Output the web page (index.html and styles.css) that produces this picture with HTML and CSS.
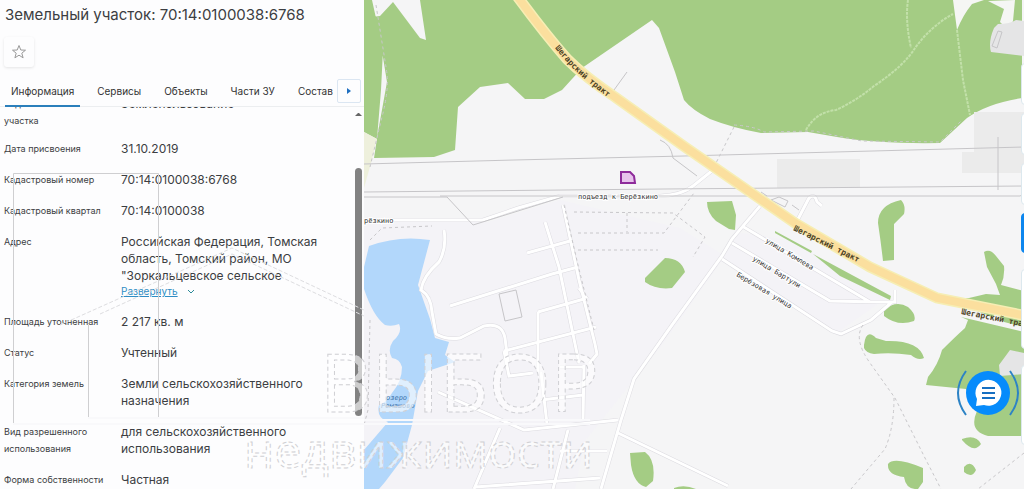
FILE: index.html
```
<!DOCTYPE html>
<html lang="ru">
<head>
  <meta charset="UTF-8">
  <meta name="viewport" content="width=device-width, initial-scale=1.0">
  <title>Земельный участок</title>
  <link rel="stylesheet" href="styles.css">
</head>
<body>
  <!-- Object card -->
  <aside class="panel">
    <h1>Земельный участок: 70:14:0100038:6768</h1>
    <button class="favorite" type="button" aria-label="В избранное">
      <svg viewBox="0 0 16 16" width="16" height="16"><path d="M8 1.500l1.800 4.500 4.700.2-3.700 3 1.300 4.600L8 11.200l-4.100 2.600L5.200 9.200l-3.700-3 4.700-.2z"/></svg>
    </button>

    <nav class="tabs">
      <a class="active" href="#info">Информация</a>
      <a href="#services">Сервисы</a>
      <a href="#objects">Объекты</a>
      <a href="#parts">Части ЗУ</a>
      <a href="#content">Состав</a>
      <button class="tabs-next" type="button" aria-label="Дальше">
        <svg viewBox="0 0 6 8" width="6" height="8"><path d="M1 1l4 3-4 3z"/></svg>
      </button>
    </nav>

    <div class="details" id="info">
      <dl>
        <div class="row"><dt class="tall">Вид земельного участка</dt><dd>Землепользование</dd></div>
        <div class="row"><dt>Дата присвоения</dt><dd>31.10.2019</dd></div>
        <div class="row"><dt>Кадастровый номер</dt><dd>70:14:0100038:6768</dd></div>
        <div class="row"><dt>Кадастровый квартал</dt><dd>70:14:0100038</dd></div>
        <div class="row">
          <dt>Адрес</dt>
          <dd>
            Российская Федерация, Томская область, Томский район, МО "Зоркальцевское сельское
            <div class="more">
              <a href="#address">Развернуть</a>
              <svg class="chevron" viewBox="0 0 8 6" width="8" height="6"><path d="M1 1l3 3 3-3"/></svg>
            </div>
          </dd>
        </div>
        <div class="row"><dt>Площадь уточненная</dt><dd>2 217 кв. м</dd></div>
        <div class="row"><dt>Статус</dt><dd>Учтенный</dd></div>
        <div class="row"><dt>Категория земель</dt><dd>Земли сельскохозяйственного назначения</dd></div>
        <div class="row"><dt class="tall">Вид разрешенного использования</dt><dd>для сельскохозяйственного использования</dd></div>
        <div class="row"><dt>Форма собственности</dt><dd>Частная</dd></div>
      </dl>
      <div class="scrollbar"><span class="up"></span><span class="thumb"></span></div>
    </div>
  </aside>

  <!-- Map -->
  <main class="map">
    <svg class="map-canvas" viewBox="364 0 660 489" preserveAspectRatio="xMinYMin slice">
      <defs>
        <g id="streets">
          <path d="M364 220h119l35-12 42-12h100q22-1 33-10l20-16"/>
          <path d="M444 230q3 18-5 32-16 14-18 28 10 6 11 22l4 22q10 6 24 4l24-12q18-4 21 12l3 24"/>
          <path d="M545 222l14 45 20 96M563 205l16 75 16 64 2 10-8 10M450 306l102-32 26-7M527 253l43-12M538 312l46-13M538 312v60M504 351l92-24M504 351l5 25 24-3M579 288l8 11"/>
          <path d="M541 400l42-5M541 372l6 52M584 365l-1 55M560 367h24M438 392l86 38 94-10"/>
          <path d="M760 206l-28 33-10 17-50 69-38 54-13 41-20 69"/>
          <path d="M618 433l110 53M500 428l-26 61M568 430l-15 59M475 487l125-9M560 451h47"/>
          <path d="M742 226l128 76M732 243l98 58 50 1h15v-12M722 259l110 72 9 3 30-14 21-18"/>
          <path d="M797 221l12-23q6-5 8 4l5 4"/>
        </g>
        <path id="trakt-a" d="M555 48q14 18 32 33 16 13 36 28"/>
        <path id="trakt-b" d="M793 230l90 45"/>
        <path id="trakt-c" d="M961 314l80 16"/>
      </defs>

      <rect class="ground" x="364" width="2000" height="1500"/>
      <path class="village" d="M364 222h124l72-22 120 28 45 28-60 85-80 100-10 48H364zM735 232l60 9 90 58-48 34-115-75z"/>

      <!-- forest -->
      <g class="forest">
        <path d="M364 0h8l11 50-2 40-4 49-13-7zM380 16l13-14 27 36 6 2-6-40h602v98q-34 5-55 20l-27 25q-61 1-103-6l-29-5-47 1q-28-5-51-14-18-9-26-19l-9-28-16-44-7-8-70 48-20 22-18 9h-19l-17-16-28 4-22 20-3 43-21 7-60 1 4-26 9-50-6-37-9-28z"/>
        <path d="M707 202l25-1 4 14-1 15-6-1-13-8q-9-8-9-19zM645 278l20-20q16 0 20 14l-13 16q-16 2-27-6zM630 453l15-1q11 8 8 29l-7 6q-12-3-15-22z"/>
        <path d="M901 200q5 5 3 14l-10 10v36l-11 1q-2-18-5-38 0-18 23-23zM884 310q12-10 24-3 9 8 6 14-16 6-30-5zM864 345q2-17 12-7l10 3q33-1 38 17-6 3-13-3-20-3-37-1-8-1-10-6z"/>
        <path d="M984 252q6-4 12 4l8 10q1 10-3 19l23 6v36l-20-5-7-9-5 4-32-13v-6h9l17-4 14 1-4-11-9-17zM961 317l63 15v104h-36q-20-5-11-25l-11-22-40-4 2-8q10-12 14-27 13-13 23-22l3-8z"/>
        <path d="M962 439q14-5 19 5-7 10-19-4zM964 467q7-8 12 3-4 9-12 2zM888 464q6-8 35 4v14l-5 7q-12 1-14-12-17-2-16-13zM775 231l37 20-1 2-36-20zM813 254l78 42-1 4-50-24z"/>
        <path d="M674 488q10-4 22 1h-22z"/>
      </g>
      <path class="clearing" d="M953 0l4 30q6-15 15-26l12-4zM988 1l16 8-4 13 8 8 5-9 2-21z"/>
      <path class="meadow" d="M364 132l13 7-6 24-7 25z"/>
      <path class="quarry" d="M998 24q12 0 18-4l8 1v35l-33-4q-3-10 3-24zM999 365l11-15 14 3v21l-24 2z"/>
      <path class="plots" d="M777 159h83v29h-83zM974 112h50v61h-62v-21h12z"/>
      <path class="lake" d="M364 267l5-21q30-11 61-6l-12 45 12 34 5 19 14 4-4 13 10 7-27 9-10 20-6 34-9 33-18 24-6 7h-15v-39l24-28q-12-4-9-17 8-3 13-12 10-12 10-26-2-8-10-9-5-8 1-17 10-9 6-17-7 3-14 1-12-9-21-36z"/>

      <!-- roads and tracks -->
      <use href="#streets" class="street-edge"/>
      <use href="#streets" class="street"/>
      <g class="power">
        <path d="M364 164l150-4 170-4 340-9M364 192l300-3 360-3M440 196h580l4-2M364 197h83l26 28 90-28M499 294l17-4 6 27-17 4zM998 137v53M627 72l-13 18M660 140q11 4 13 18l24 18"/>
        <path d="M761 192l6 4M771 200l8-3 9 4-3 6zM792 205l7 5M998 31l-6 15 5 2 5-16z"/>
      </g>
      <g class="track">
        <path d="M376 5l10 62q4 20-4 50l-12 50M574 212l99 1 32 24-12 20M627 213v19M578 233h86l30-40M578 250h80M564 205l14 60 16 65M734 125q20 1 30 7l50-1 48 10 78 1 22-22M734 127l-18 36M370 240l12-12 50-2M370 320l-2 90-4 15M863 325q-10 14 7 38l25 35 30 60 16 31M894 398q0 30-9 51l-34 40M1024 453l-46 36"/>
      </g>
      <path class="forest-path" d="M806 130q10-18 30-20 20-9 38-24 30-20 41-38 16-22 38-34M908 0q-3 20 3 48M957 30l6 50 7 35"/>

      <path class="main-edge" d="M517-4q28 38 50 63 18 18 48 38l70 50 110 76 75 44 67 31 90 18"/>
      <path class="main-road" d="M517-4q28 38 50 63 18 18 48 38l70 50 110 76 75 44 67 31 90 18"/>

      <path class="parcel" d="M621 172h9l4 4 1 7h-14z"/>

      <g class="road-name">
        <text><textPath href="#trakt-a">Шегарский тракт</textPath></text>
        <text><textPath href="#trakt-b">Шегарский тракт</textPath></text>
        <text><textPath href="#trakt-c">Шегарский тракт</textPath></text>
      </g>
      <g class="street-name">
        <text x="578" y="199">подъезд к Берёзкино</text>
        <text x="364" y="223">рёзкино</text>
        <text transform="translate(765 242) rotate(31)">улица Комлева</text>
        <text transform="translate(752 260) rotate(31)">улица Бартули</text>
        <text transform="translate(736 276) rotate(31)">Берёзовая улица</text>
      </g>
      <g class="lake-name">
        <text x="386" y="400">озеро</text>
        <text x="381" y="408">Ромашово</text>
      </g>
    </svg>

    <div class="controls">
      <button type="button" aria-label="Слои"></button>
      <button type="button" aria-label="Измерения"></button>
      <button type="button" aria-label="Печать"></button>
      <button class="on" type="button" aria-label="Легенда"></button>
      <button type="button" aria-label="Масштаб"></button>
      <button type="button" aria-label="Местоположение"></button>
    </div>

    <button class="chat" type="button" aria-label="Чат">
      <svg viewBox="0 0 64 50" width="64" height="50">
        <path class="wave" d="M10 3q-16 22 0 44M54 3q16 22 0 44"/>
        <circle class="chat-bg" cx="32" cy="25" r="22"/>
        <path class="bubble" d="M20 38l1-7a13 13 0 1 1 7 6z"/>
        <path class="lines" d="M26 20h13M26 25h13M26 30h13"/>
      </svg>
    </button>
  </main>

  <!-- Agency watermark -->
  <svg class="watermark" width="600" height="489" viewBox="0 0 600 489">
    <path class="frame" d="M13.500 425V173.500h145V418M88.500 325v93"/>
    <path class="shine" d="M88 418h276M13 424h577M364 420h226"/>
    <path class="roof" d="M60 325l172-77 132 62M100 314l132-60 132 62"/>
    <text class="brand" x="320" y="412">ВЫБОР</text>
    <text class="brand-sub" x="244" y="468">недвижимости</text>
  </svg>
</body>
</html>
```
FILE: styles.css
```
/* General styling */
* {
  box-sizing: border-box;
}

body {
  margin: 0;
  display: flex;
  height: 100vh;
  position: relative;
  overflow: hidden;
  font-family: Inter, "Liberation Sans", sans-serif;
  color: #3c3e42;
  background: #fdfdfe;
}

button {
  padding: 0;
  border: none;
  background: none;
  cursor: pointer;
}

/* Object card */
.panel {
  flex: 0 0 364px;
  display: flex;
  flex-direction: column;
  min-width: 0;
  min-height: 0;
}

.panel h1 {
  margin: 0;
  padding: 5px 5px 0;
  font-size: 15px;
  line-height: 20px;
  font-weight: 400;
  white-space: nowrap;
}

.favorite {
  width: 30px;
  height: 30px;
  margin: 12px 4px 8px;
  display: flex;
  align-items: center;
  justify-content: center;
  border-radius: 3px;
  box-shadow: 0 1px 3px rgba(0, 0, 0, 0.1);
}

.favorite svg {
  fill: none;
  stroke: #999;
}

.tabs {
  display: flex;
  align-items: center;
  flex-shrink: 0;
  height: 32px;
  padding: 0 3px 0 5px;
  border-bottom: 1px solid #eceef0;
}

.tabs a {
  height: 32px;
  margin-right: 11px;
  padding: 0 6px;
  font-size: 10px;
  line-height: 32px;
  color: #333;
  text-decoration: none;
  white-space: nowrap;
}

.tabs a:last-of-type {
  margin-right: 0;
  padding-right: 0;
}

.tabs .active {
  border-bottom: 2px solid #2b7fbb;
}

.tabs-next {
  width: 24px;
  height: 24px;
  margin-left: auto;
  border: 1px solid #dbe6f2;
  border-radius: 2px;
  fill: #1f6fc0;
}

/* Attributes */
.details {
  flex: 1;
  min-height: 0;
  position: relative;
  overflow: hidden;
}

.details dl {
  margin: -12px 0 0;
  padding: 0 44px 0 4px;
}

.row {
  display: flex;
  margin-bottom: 14px;
}

.row:first-child {
  margin-bottom: 11px;
}

.row dt {
  flex: 0 0 117px;
  padding-right: 10px;
  font-size: 9px;
  line-height: 17px;
  white-space: nowrap;
}

.row dt.tall {
  white-space: normal;
}

.row dd {
  margin: 0;
  font-size: 12px;
  line-height: 17px;
}

.more {
  display: flex;
  align-items: center;
  gap: 9px;
  height: 15px;
  font-size: 10px;
}

.more a {
  color: #2f8dc4;
}

.chevron {
  fill: none;
  stroke: #2b8a99;
}

.scrollbar {
  position: absolute;
  top: 0;
  right: 2px;
  width: 7px;
  height: 100%;
}

.up {
  display: block;
  margin-top: 6px;
  border: 3px solid transparent;
  border-top: 0;
  border-bottom: 3px solid #666;
}

.thumb {
  display: block;
  height: 65%;
  margin-top: 52px;
  border-radius: 4px;
  background: #828282;
}

/* Map */
.map {
  flex: 1;
  min-width: 0;
  position: relative;
  overflow: hidden;
}

.map-canvas {
  display: block;
  width: 100%;
  height: 100%;
}

.map-canvas path {
  fill: none;
}

.map-canvas .ground { fill: #f5f5f6; }
.map-canvas .village { fill: #f4f3f7; }
.map-canvas .forest path { fill: #a4cc84; }
.map-canvas .clearing { fill: #f5f6f4; }
.map-canvas .meadow { fill: #eef0dc; }
.map-canvas .quarry { fill: #e5e5e6; }
.map-canvas .plots { fill: #ebebeb; }
.map-canvas .lake { fill: #b2d7fb; }

.street-edge {
  fill: none;
  stroke: #dcdbe0;
  stroke-width: 4;
}

.street {
  fill: none;
  stroke: #fff;
  stroke-width: 3;
}

.power {
  stroke: #c6c5c8;
}

.track {
  stroke: #c8c7ca;
  stroke-dasharray: 3 3;
}

.forest-path {
  stroke: #c2e0a9;
  stroke-width: 2;
  stroke-dasharray: 3 1;
}

.main-edge {
  stroke: #f6eeb4;
  stroke-width: 11;
}

.main-road {
  stroke: #fbdf9e;
  stroke-width: 8;
}

.map-canvas .parcel {
  fill: #e7c3ec;
  stroke: #8e2b9b;
  stroke-width: 2;
}

.road-name,
.street-name,
.lake-name {
  font-family: "DejaVu Sans Mono", monospace;
}

.road-name {
  font-size: 8px;
  font-weight: bold;
  fill: #4d4326;
}

.street-name {
  font-size: 7px;
  fill: #333;
  stroke: #fff;
  stroke-width: 2px;
  paint-order: stroke;
}

.lake-name {
  font-size: 7px;
  font-style: italic;
  fill: #3f74ab;
}

/* Map controls */
.controls {
  position: absolute;
  top: 63px;
  right: -34px;
  display: flex;
  flex-direction: column;
  gap: 8px;
}

.controls button {
  width: 37px;
  height: 42px;
  border: 1px solid #dce8ee;
  border-radius: 4px;
  background: #fff;
}

.controls .on {
  height: 40px;
  border-color: #0d86ee;
  background: #0d86ee;
}

.controls .on ~ button {
  height: 80px;
  margin-top: 8px;
}

.chat {
  position: absolute;
  right: 4px;
  bottom: 71px;
  width: 64px;
  height: 50px;
}

.wave {
  fill: none;
  stroke: #2d83c5;
  stroke-width: 2;
}

.chat-bg { fill: #068bfb; }
.bubble { fill: #fff; }

.lines {
  stroke: #176fc1;
  stroke-width: 2;
}

/* Watermark */
.watermark {
  position: absolute;
  top: 0;
  left: 0;
  pointer-events: none;
  fill: none;
}

.frame {
  stroke: #cfcfd1;
}

.shine {
  stroke: #f9f9fb;
  stroke-width: 2;
}

.roof {
  stroke: #dddde0;
  stroke-dasharray: 4 2;
}

.brand,
.brand-sub {
  font-family: "Open Sans", sans-serif;
  fill: #fff;
  fill-opacity: 0.6;
  stroke: #d0d0d4;
  stroke-dasharray: 4 3;
}

.brand { font-size: 80px; }
.brand-sub { font-size: 48px; }
```
